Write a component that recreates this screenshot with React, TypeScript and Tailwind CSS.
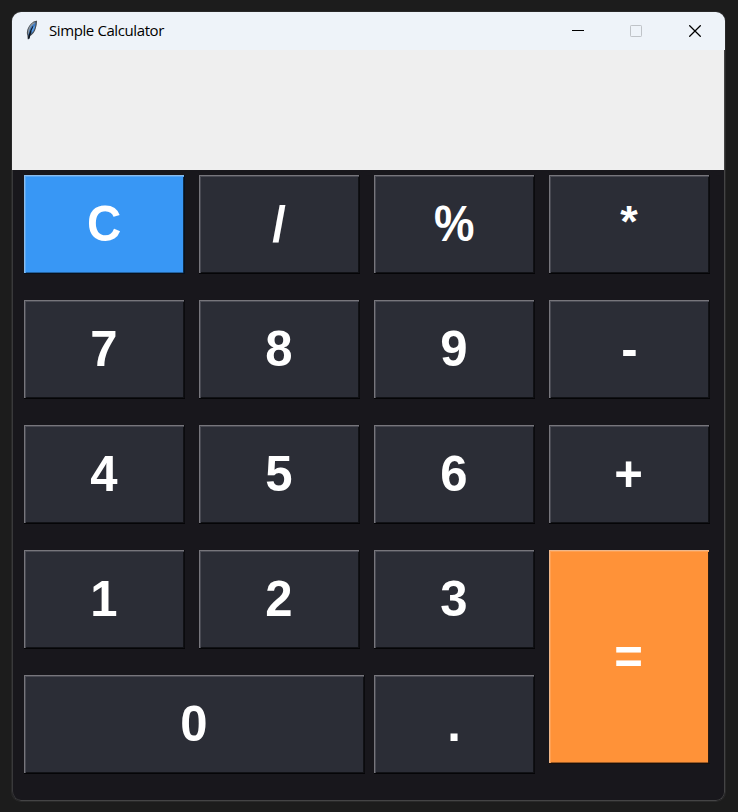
type Key = { label: string; kind?: 'clear' | 'equals' };

const KEYS: Key[] = [
  { label: 'C', kind: 'clear' },
  { label: '/' },
  { label: '%' },
  { label: '*' },
  { label: '7' },
  { label: '8' },
  { label: '9' },
  { label: '-' },
  { label: '4' },
  { label: '5' },
  { label: '6' },
  { label: '+' },
  { label: '1' },
  { label: '2' },
  { label: '3' },
  { label: '=', kind: 'equals' },
  { label: '0' },
  { label: '.' },
];

const tone = {
  normal:
    'bg-[#2b2d36] h-[99px] shadow-[inset_0_-1px_0_#050507,inset_-1px_0_0_#0b0b0e,inset_1px_1px_0_#77767c,inset_2px_2px_0_#484952,inset_-2px_-2px_0_#111216]',
  clear:
    'bg-[#3897f5] h-[99px] shadow-[inset_0_-1px_0_#08111c,inset_-1px_0_0_#08111c,inset_1px_1px_0_#8abcec,inset_2px_2px_0_#58a7f5,inset_-2px_0_0_#102c47,inset_0_-2px_0_#24629f]',
  equals:
    'bg-[#ff9238] h-[214px] row-span-2 shadow-[inset_0_-1px_0_#1b1009,inset_-1px_0_0_#18171c,inset_1px_1px_0_#efb78a,inset_2px_2px_0_#ffa052,inset_-2px_0_0_#2c1b10,inset_0_-2px_0_#9a5a26]',
};

// Symbols whose glyph is set narrower or smaller than the regular face.
const glyph: Record<string, string> = {
  '%': 'scale-x-[0.91]',
  '*': 'text-[45px] font-semibold -translate-y-[3px]',
  C: 'scale-x-[0.95]',
};

function CalcButton({ item }: { item: Key }) {
  const span = item.label === '0' ? 'col-span-2 w-[341px]' : 'w-[161px]';
  return (
    <button
      className={`${tone[item.kind ?? 'normal']} ${span} flex items-center justify-center pr-px pb-px text-[50px] leading-none font-bold text-white`}
    >
      <span className={glyph[item.label] ?? 'scale-x-[0.98]'}>{item.label}</span>
    </button>
  );
}

function Feather() {
  return (
    <svg width="14" height="22" viewBox="0 0 14 22" className="block">
      <path d="M11.4 1.4C8 1.8 4.2 5.4 3 9.5c-.7 2.3-.7 4.3 0 6l.3 3.6 1-3.4c2.8-1.2 5-4.2 5.9-7.3.7-2.4 1.2-4.8 1.2-7z" fill="#3d7bc4" stroke="#4a4f55" strokeWidth="1.2" />
      <path d="M9.6 2.6C6.6 4.2 4.4 7 3.8 10.6l-.4 3" fill="none" stroke="#8f979e" strokeWidth="1.2" />
      <path d="M8.4 6.4C6.6 9 5 12 3.7 18.6" fill="none" stroke="#0d1622" strokeWidth="1.6" />
      <path d="M9.4 6.2 7 11.6" stroke="#5a9de6" strokeWidth="1.6" />
    </svg>
  );
}

function TitleBar() {
  return (
    <header className="flex h-[38px] items-center bg-[#eef3f9] pl-[13px] text-black">
      <Feather />
      <h1 className="ml-[10px] flex-1 pb-[2px] font-['Open_Sans','Noto_Sans',sans-serif] text-[15px] leading-none tracking-[-0.4px] whitespace-nowrap">
        Simple Calculator
      </h1>
      <div className="flex items-center">
        <button className="flex h-[38px] w-[58px] items-center justify-center" aria-label="Minimize">
          <svg width="12" height="12" viewBox="0 0 12 12"><path d="M0 5.5h12" stroke="#000" /></svg>
        </button>
        <button className="flex h-[38px] w-[58px] items-center justify-center" aria-label="Maximize">
          <svg width="12" height="12" viewBox="0 0 12 12"><rect x=".5" y=".5" width="11" height="11" rx=".7" fill="none" stroke="#bfc3c8" /></svg>
        </button>
        <button className="flex h-[38px] w-[60px] items-center justify-center" aria-label="Close">
          <svg width="12" height="12" viewBox="0 0 12 12"><path d="M.3.3l11.4 11.4M11.7.3L.3 11.7" stroke="#000" strokeWidth="1.25" /></svg>
        </button>
      </div>
    </header>
  );
}

export default function App() {
  return (
    <div className="h-[812px] w-[738px] overflow-hidden bg-[#1c1c1c] pt-3 pl-3 font-['Liberation_Sans',Arial,sans-serif]">
      <main className="h-[789px] w-[713px] overflow-hidden rounded-[9px] bg-[#18171c] shadow-[0_0_0_1px_#292929]">
        <TitleBar />
        <div className="h-[751px] rounded-b-[9px] border-r border-b border-[#444445]">
          <div className="h-[120px] bg-[#efefef]" />
          <div className="h-[630px] rounded-bl-[9px] border-l border-[#39393b] pt-[5px] pl-[11px]">
            <div className="grid grid-cols-[160px_160px_160px_160px] grid-rows-[99px_99px_99px_99px_99px] gap-x-[15px] gap-y-[26px]">
              {KEYS.map((item) => (
                <CalcButton key={item.label} item={item} />
              ))}
            </div>
          </div>
        </div>
      </main>
    </div>
  );
}
